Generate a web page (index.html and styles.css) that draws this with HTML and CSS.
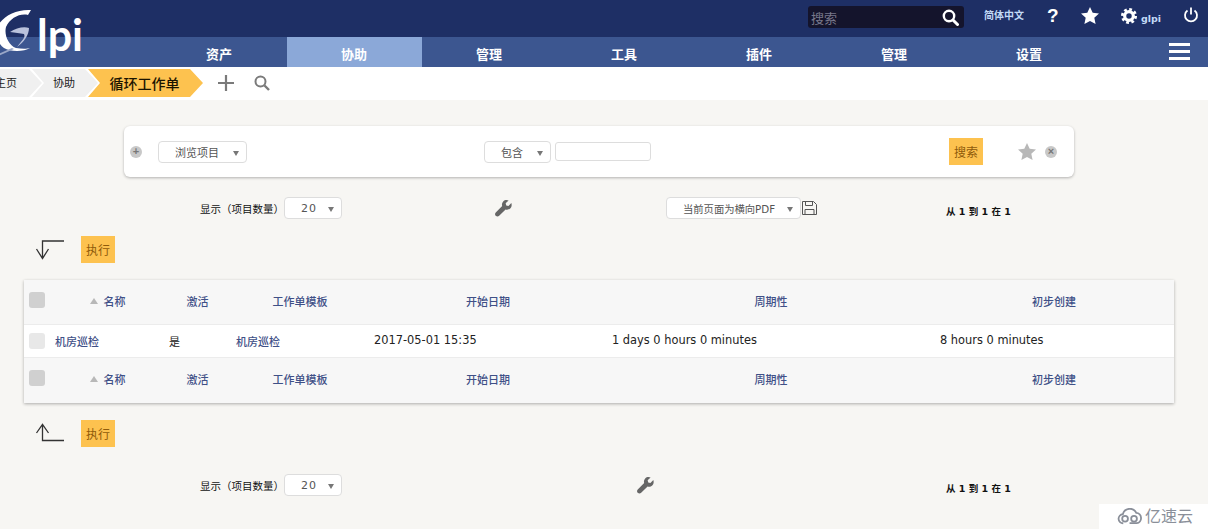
FILE: index.html
```html
<!DOCTYPE html>
<html lang="zh">
<head>
<meta charset="utf-8">
<title>循环工作单 - GLPI</title>
<link rel="stylesheet" href="styles.css">
</head>
<body>
<header class="header">
  <div class="topbar">
    <div class="search">
      <span class="search-ph">搜索</span>
      <svg width="17" height="17" viewBox="0 0 17 17"><circle cx="7" cy="7" r="5.2" fill="none" stroke="#fff" stroke-width="2.4"/><path d="M11 11l4.500 4.500" stroke="#fff" stroke-width="3" stroke-linecap="round"/></svg>
    </div>
    <span class="lang">简体中文</span>
    <span class="help">?</span>
    <svg class="top-star" width="18" height="17" viewBox="0 0 18 17"><path fill="#fff" d="M9 0l2.7 5.8 6.3.7-4.7 4.2 1.3 6.3L9 13.9 3.4 17l1.3-6.3L0 6.500l6.300-.7z"/></svg>
    <svg class="gear" width="16" height="16" viewBox="0 0 17 17"><circle cx="8.500" cy="8.500" r="4.600" fill="none" stroke="#fff" stroke-width="3.400"/><circle cx="8.500" cy="8.500" r="7" fill="none" stroke="#fff" stroke-width="3" stroke-dasharray="2.900 2.600"/></svg>
    <span class="user">glpi</span>
    <svg class="power" width="16" height="16" viewBox="0 0 16 16"><path d="M4.500 3.500a6 6 0 1 0 7 0" fill="none" stroke="#fff" stroke-width="1.800"/><path d="M8 0.500v7" stroke="#fff" stroke-width="1.800"/></svg>
  </div>
  <nav class="nav">
    <a class="nav-item">资产</a>
    <a class="nav-item nav-active">协助</a>
    <a class="nav-item">管理</a>
    <a class="nav-item">工具</a>
    <a class="nav-item">插件</a>
    <a class="nav-item">管理</a>
    <a class="nav-item">设置</a>
    <span class="burger"><i></i><i></i><i></i></span>
  </nav>
  <div class="logo">
    <svg class="logo-g" width="36" height="60" viewBox="0 0 36 60">
      <path fill="#fff" d="M31 10 L28 15 C20 13 10 18 6 27 C4 34 8 45 16 48 C22 49 27 49 30 48 C24 52 10 52 4 48 C-2 44 -4 36 -4 30 C0 18 14 9 31 10 Z"/>
      <path fill="#b9c2dc" d="M10 32 C16 28 24 26 29 28 C29 35 24 42 17 47 C21 41 26 38 24 34 C20 33 15 33 10 32 Z"/>
      <path fill="#9aa7c8" d="M-2 54 L12 48 L14 49 L-2 56 Z"/>
    </svg>
    <span class="logo-text">lpi</span>
  </div>
</header>

<div class="crumbs">
  <a class="crumb crumb-home">主页</a>
  <a class="crumb crumb-mid">协助</a>
  <a class="crumb crumb-current">循环工作单</a>
  <svg class="crumb-plus" width="16" height="16" viewBox="0 0 16 16"><path d="M8 0v16M0 8h16" stroke="#7a7a7a" stroke-width="2.200"/></svg>
  <svg class="crumb-search" width="16" height="16" viewBox="0 0 16 16"><circle cx="6.500" cy="6.500" r="5" fill="none" stroke="#7a7a7a" stroke-width="2"/><path d="M10.500 10.500l4.500 4.500" stroke="#7a7a7a" stroke-width="2.400"/></svg>
</div>

<main class="main">
  <section class="card">
    <span class="round-btn round-plus">+</span>
    <div class="select sel-item"><span>浏览项目</span><i class="caret"></i></div>
    <div class="select sel-op"><span>包含</span><i class="caret"></i></div>
    <div class="textbox"></div>
    <button class="btn btn-search">搜索</button>
    <svg class="card-star" width="18" height="17" viewBox="0 0 18 17"><path fill="#b8b8b8" d="M9 0l2.700 5.800 6.300.7-4.700 4.200 1.300 6.300L9 13.900 3.400 17l1.300-6.300L0 6.500l6.300-.7z"/></svg>
    <span class="round-btn round-x">×</span>
  </section>

  <div class="pager pager-top">
    <div class="per-page"><span>显示（项目数量）</span><div class="select sel-num"><span>20</span><i class="caret"></i></div></div>
    <svg class="wrench" width="17" height="17" viewBox="0 0 18 18"><path fill="#666" d="M17.300 3.300 14.200 6.300 11.900 5.800 11.300 3.500 14.400.6C12.500-.4 10.100 0 8.700 1.500 7.400 2.800 7 4.700 7.600 6.400L.8 13.200c-1 1-1 2.600 0 3.600s2.600 1 3.600 0l6.800-6.800c1.700.6 3.600.2 4.900-1.100 1.500-1.500 1.900-3.700 1.200-5.600z"/></svg>
    <div class="export">
      <div class="select sel-pdf"><span>当前页面为横向PDF</span><i class="caret"></i></div>
      <svg width="15" height="14" viewBox="0 0 15 14"><path d="M.5.500h11l3 3v10H.5z M3.500.500v4h7v-4 M3 13.500v-5h9v5" fill="none" stroke="#555" stroke-width="1"/></svg>
    </div>
    <b class="range">从 1 到 1 在 1</b>
  </div>

  <div class="actions actions-top">
    <svg width="30" height="24" viewBox="0 0 30 24"><path d="M29 3H7.500v17M1.500 11l6 9.500 6-9.500" fill="none" stroke="#333" stroke-width="1.300"/></svg>
    <button class="btn">执行</button>
  </div>

  <section class="table">
    <div class="row row-head">
      <span class="cb cb-dark"></span>
      <span class="th"><i class="sort"></i>名称</span>
      <span class="th">激活</span>
      <span class="th">工作单模板</span>
      <span class="th">开始日期</span>
      <span class="th">周期性</span>
      <span class="th">初步创建</span>
    </div>
    <div class="row row-data">
      <span class="cb cb-light"></span>
      <a class="td td-link td-first">机房巡检</a>
      <span class="td td-cjk">是</span>
      <a class="td td-link">机房巡检</a>
      <span class="td td-latin">2017-05-01 15:35</span>
      <span class="td td-latin">1 days 0 hours 0 minutes</span>
      <span class="td td-latin">8 hours 0 minutes</span>
    </div>
    <div class="row row-foot">
      <span class="cb cb-dark"></span>
      <span class="th"><i class="sort"></i>名称</span>
      <span class="th">激活</span>
      <span class="th">工作单模板</span>
      <span class="th">开始日期</span>
      <span class="th">周期性</span>
      <span class="th">初步创建</span>
    </div>
  </section>

  <div class="actions actions-bottom">
    <svg width="30" height="24" viewBox="0 0 30 24"><path d="M29 18.500H7.500V3M1.500 11l6-8.500 6 8.500" fill="none" stroke="#333" stroke-width="1.300"/></svg>
    <button class="btn">执行</button>
  </div>

  <div class="pager pager-bottom">
    <div class="per-page"><span>显示（项目数量）</span><div class="select sel-num"><span>20</span><i class="caret"></i></div></div>
    <svg class="wrench" width="17" height="17" viewBox="0 0 18 18"><path fill="#666" d="M17.300 3.300 14.200 6.300 11.900 5.800 11.300 3.500 14.400.6C12.500-.4 10.100 0 8.700 1.500 7.400 2.800 7 4.700 7.600 6.400L.8 13.200c-1 1-1 2.600 0 3.600s2.600 1 3.600 0l6.800-6.800c1.700.6 3.600.2 4.900-1.100 1.500-1.500 1.900-3.700 1.200-5.600z"/></svg>
    <b class="range">从 1 到 1 在 1</b>
  </div>
</main>

<div class="watermark">
  <svg width="26" height="17" viewBox="0 0 29 18"><path d="M7 16.500a5 5 0 0 1-.5-10A8 8 0 0 1 21.500 5a5.800 5.800 0 0 1 .5 11.500H14" fill="none" stroke="#8a8f99" stroke-width="2"/><circle cx="9" cy="11.500" r="3.200" fill="none" stroke="#8a8f99" stroke-width="2"/><circle cx="19" cy="11.500" r="3.200" fill="none" stroke="#8a8f99" stroke-width="2"/></svg>
  <span>亿速云</span>
</div>
</body>
</html>
```

FILE: styles.css
```css
* { box-sizing: border-box; }
html, body { margin: 0; height: 529px; overflow: hidden; }
body {
  position: relative;
  background: #f7f6f3;
  color: #222;
  font: 11px "DejaVu Sans", "Noto Sans CJK SC", sans-serif;
}

/* header */
.header { position: relative; height: 67px; background: #1e2f65; }
.topbar { height: 37px; display: flex; align-items: center; padding-left: 808px; }
.search {
  width: 156px; height: 22px; margin-top: -3px;
  display: flex; align-items: center; justify-content: space-between;
  padding: 0 5px 0 3px;
  background: #14142c; border-radius: 3px;
}
.search-ph { font-size: 13px; color: #77778a; }
.lang { margin: -9px 0 0 20px; width: 40px; font-size: 10px; font-weight: 700; color: #c3daf6; white-space: nowrap; }
.help { margin: -6px 0 0 23px; width: 10px; font: 700 19px "Liberation Sans", sans-serif; color: #fff; }
.top-star { margin: -6px 0 0 24px; }
.gear { margin: -6px 0 0 22px; }
.user { margin: 0 0 0 4px; width: 23px; font: 700 9.500px "DejaVu Sans", sans-serif; color: #c3daf6; }
.power { margin: -8px 0 0 19px; }

.nav { height: 30px; display: flex; padding-left: 152px; background: #3c5690; }
.nav-item {
  width: 135px; padding: 7px 1px 0 0; text-align: center;
  font-size: 13px; font-weight: 700; color: #fff;
}
.nav-active { background: #8ba8d8; }
.burger {
  margin-left: 72px; width: 21px; padding-top: 6px;
  display: flex; flex-direction: column; gap: 4px;
}
.burger i { height: 3px; background: #fff; }

.logo { position: absolute; left: 0; top: 0; height: 60px; }
.logo-g { position: absolute; left: 0; top: 0; }
.logo-text {
  position: absolute; left: 37px; top: 9px;
  font: 700 43px/1.2 Lato, sans-serif; color: #fff;
}

/* breadcrumbs */
.crumbs { height: 33px; display: flex; align-items: center; background: #fff; padding-bottom: 1px; }
.crumb {
  height: 28px; display: flex; align-items: center; justify-content: center;
  background: #f0f0f0; color: #222;
  clip-path: polygon(0 0, calc(100% - 13px) 0, 100% 50%, calc(100% - 13px) 100%, 0 100%, 12px 50%);
}
.crumb-home { margin-left: -18px; width: 60px; padding: 0 12px 2px 0; }
.crumb-mid { margin-left: -10px; width: 66px; padding: 0 2px 2px 0; }
.crumb-current {
  margin-left: -10px; width: 115px; padding-right: 2px;
  background: #fdc24f; color: #1b1400; font-size: 14px; font-weight: 500;
}
.crumb-plus { margin-left: 15px; }
.crumb-search { margin-left: 20px; }

/* search card */
.main { padding-top: 26px; }
.card {
  margin-left: 124px; width: 950px; height: 51px;
  display: flex; align-items: center;
  background: #fff; border-radius: 6px;
  box-shadow: 0 1px 3px rgba(0,0,0,.28);
}
.round-btn {
  width: 12px; height: 12px; border-radius: 50%;
  display: flex; align-items: center; justify-content: center;
  background: #c8c8c8; color: #777; font: 700 11px/1 "Liberation Sans", sans-serif;
}
.round-plus { margin-left: 6px; }
.round-x { margin-left: 9px; }
.select {
  position: relative; height: 22px; display: flex; align-items: center;
  background: #fff; border: 1px solid #ddd; border-radius: 4px;
  color: #555; font-size: 11px; white-space: nowrap;
}
.caret {
  position: absolute; right: 7px; top: 9px;
  border: 3px solid transparent; border-top: 5px solid #777; border-bottom: 0;
}
.sel-item { margin-left: 16px; width: 89px; padding-left: 16px; }
.sel-op { margin-left: 237px; width: 67px; padding-left: 16px; }
.textbox { margin-left: 4px; width: 96px; height: 19px; border: 1px solid #ddd; border-radius: 3px; }
.btn {
  width: 34px; height: 27px; padding: 0; border: 0;
  background: #fdc24f; color: #8f5a0a;
  font: 12px "DejaVu Sans", "Noto Sans CJK SC", sans-serif;
}
.btn-search { margin-left: 298px; }
.card-star { margin-left: 35px; }

/* pagers */
.pager { display: grid; align-items: center; height: 22px; padding-left: 200px; }
.pager-top { margin-top: 20px; grid-template-columns: 295px 171px 280px auto; }
.pager-bottom { margin-top: 27px; grid-template-columns: 437px 309px auto; }
.per-page { display: flex; align-items: center; font-size: 10.500px; color: #111; }
.per-page > span { width: 84px; white-space: nowrap; }
.sel-num { width: 58px; padding-left: 16px; letter-spacing: 1px; }
.export { display: flex; align-items: flex-start; }
.export svg { margin: 4px 0 0 1px; }
.sel-pdf { width: 135px; padding-left: 16px; font-size: 10.300px; }
.range { font-size: 9.500px; padding-top: 5px; color: #111; white-space: nowrap; }
.wrench { margin-top: 1px; }

/* actions */
.actions { display: flex; align-items: center; height: 27px; padding-left: 35px; }
.actions-top { margin-top: 17px; }
.actions-bottom { margin-top: 17px; }
.actions .btn { margin-left: 16px; }

/* table */
.table {
  margin: 17px 0 0 24px; width: 1150px; height: 123px;
  background: #f7f7f7;
  box-shadow: 0 1px 3px rgba(0,0,0,.3);
}
.row {
  display: grid;
  grid-template-columns: 27px 113px 67px 138px 238px 328px 238px;
  align-items: center;
}
.row-head { height: 45px; border-bottom: 1px solid #ececec; }
.row-data { height: 33px; background: #fff; border-bottom: 1px solid #ececec; }
.row-foot { height: 45px; }
.cb { margin-left: 5px; width: 16px; height: 16px; border-radius: 3px; }
.cb-dark { background: #d0d0d0; }
.cb-light { background: #e8e8e8; }
.row-head .cb { margin-top: -4px; }
.th {
  display: flex; align-items: center; justify-content: center;
  font-size: 11px; font-weight: 500; color: #3f5087;
}
.row-head .th { margin-top: -2px; }
.row-foot .th { margin-top: -3px; }
.row-foot .cb { margin-top: -6px; }
.sort {
  margin-right: 6px;
  border: 4px solid transparent; border-bottom: 6px solid #b8b8b8; border-top: 0;
}
.td { padding-left: 5px; font-size: 11px; color: #222; white-space: nowrap; }
.td-latin { font-size: 11.400px; margin-top: -2px; }
.td-link { color: #3f5087; font-weight: 500; }
.td-first { margin-left: -1px; }

/* watermark */
.watermark {
  position: absolute; right: 0; bottom: 0; width: 109px; height: 25px;
  display: flex; align-items: center; gap: 2px; padding-left: 18px;
  background: #fff; color: #8a8f99; font-size: 16px; line-height: 1;
}
```
